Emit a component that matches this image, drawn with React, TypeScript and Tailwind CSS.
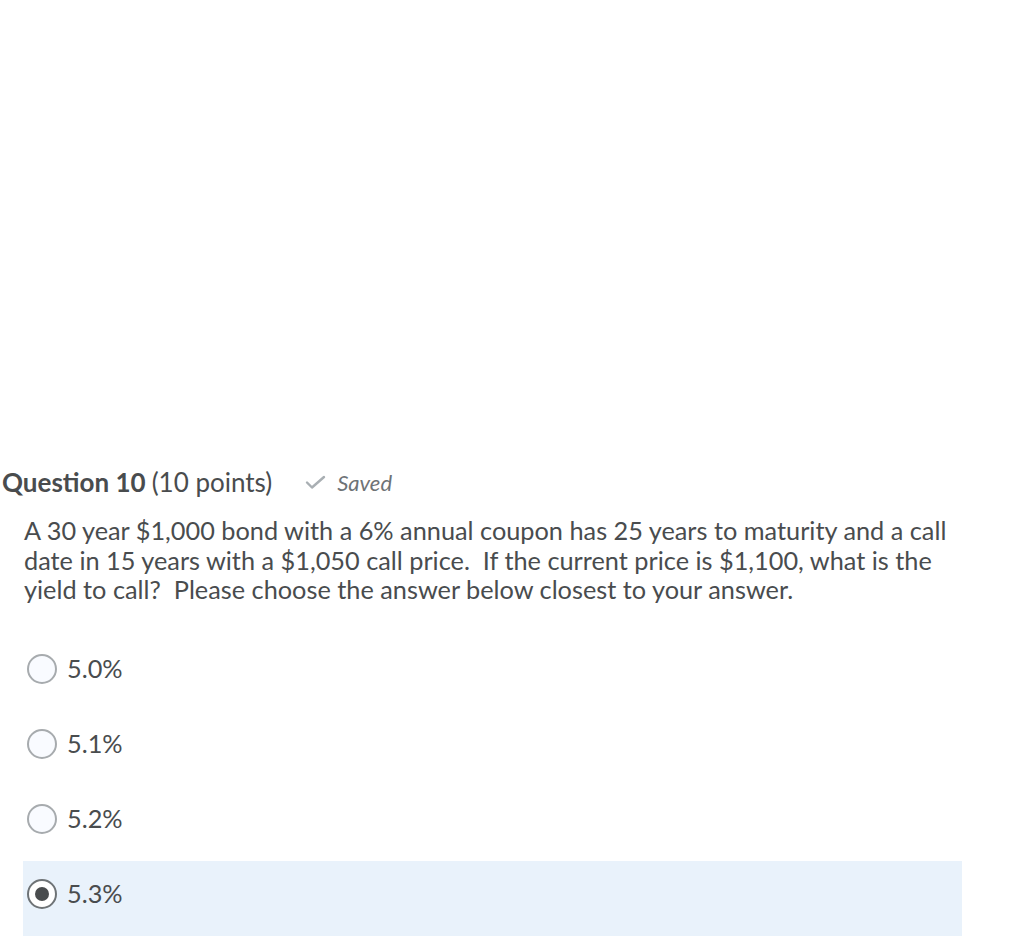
const options = ["5.0%", "5.1%", "5.2%", "5.3%"];
const selected = 3;

function Radio({ checked }: { checked: boolean }) {
  return (
    <span
      className={
        "flex items-center justify-center w-[30px] h-[30px] rounded-full border-2 shrink-0 " +
        (checked ? "border-[#6e7376] bg-white" : "border-[#a7abae] bg-[#f9fbff]")
      }
    >
      {checked && <span className="w-[14px] h-[14px] rounded-full bg-[#494c4e]" />}
    </span>
  );
}

export default function App() {
  return (
    <div
      className="w-[1024px] h-[945px] bg-white text-[#494c4e] overflow-hidden"
      style={{ fontFamily: "Lato, 'Liberation Sans', sans-serif" }}
    >
      <div className="pt-[464px]">
        <div className="flex items-center h-[36px] pl-[2px]">
          <span className="text-[26px] font-bold">Question 10</span>
          <span className="text-[26px] ml-[6px]">(10 points)</span>
          <span className="flex items-center ml-[33px]">
            <svg width="21" height="16" viewBox="0 0 21 16" fill="none">
              <path d="M2 8.5l5 5L19 3" stroke="#a9afb3" strokeWidth="2.4" strokeLinecap="round" strokeLinejoin="round" />
            </svg>
          </span>
          <span className="ml-[11px] text-[22px] italic text-[#6e7376]">Saved</span>
        </div>

        <p className="mt-[16px] pl-[24px] text-[25.3px] leading-[29.5px] whitespace-nowrap">
          A 30 year $1,000 bond with a 6% annual coupon has 25 years to maturity and a call
          <br />
          date in 15 years with a $1,050 call price.&nbsp; If the current price is $1,100, what is the
          <br />
          yield to call?&nbsp; Please choose the answer below closest to your answer.
        </p>

        <div className="mt-[31px] flex flex-col w-[939px] ml-[23px]">
          {options.map((o, i) => (
            <div
              key={o}
              className={
                "flex items-center gap-[10px] h-[75px] pl-[4px] pb-[9px] " +
                (i === selected ? "bg-[#e9f2fb]" : "")
              }
            >
              <Radio checked={i === selected} />
              <span className="text-[25.3px]">{o}</span>
            </div>
          ))}
        </div>
      </div>
    </div>
  );
}
